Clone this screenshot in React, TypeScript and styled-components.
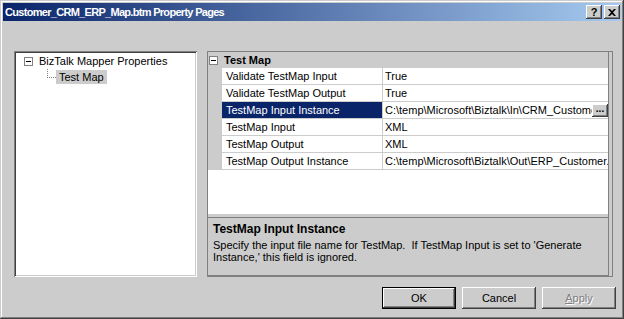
import React from 'react';
import styled, { createGlobalStyle } from 'styled-components';

const rows = [
  { name: 'Validate TestMap Input', value: 'True' },
  { name: 'Validate TestMap Output', value: 'True' },
  { name: 'TestMap Input Instance', value: 'C:\\temp\\Microsoft\\Biztalk\\In\\CRM_Customer.xml', selected: true },
  { name: 'TestMap Input', value: 'XML' },
  { name: 'TestMap Output', value: 'XML' },
  { name: 'TestMap Output Instance', value: 'C:\\temp\\Microsoft\\Biztalk\\Out\\ERP_Customer.xml' },
];

const App: React.FC = () => {
  return (
    <>
      <GlobalStyle />
      <Window>
        <TitleBar>
          <TitleText>Customer_CRM_ERP_Map.btm Property Pages</TitleText>
          <CaptionButton>?</CaptionButton>
          <CaptionButton $gap>
            <svg width="8" height="7" viewBox="0 0 8 7">
              <path d="M0 0h2l2 2 2-2h2L5 3.5 8 7H6L4 5 2 7H0l3-3.5z" fill="#000" />
            </svg>
          </CaptionButton>
        </TitleBar>
        <Body>
          <Panels>
            <TreePanel>
              <TreeRow>
                <ToggleBox $tree />
                <TreeLabel>BizTalk Mapper Properties</TreeLabel>
              </TreeRow>
              <TreeRow>
                <Connector />
                <TreeLabel $selected>Test Map</TreeLabel>
              </TreeRow>
            </TreePanel>
            <GridPanel>
              <Grid>
                <CategoryRow>
                  <ToggleBox />
                  <CategoryLabel>Test Map</CategoryLabel>
                </CategoryRow>
                {rows.map((row) => (
                  <PropRow key={row.name}>
                    <Margin />
                    <NameCell $selected={row.selected}>{row.name}</NameCell>
                    <ValueCell>
                      <ValueText>{row.value}</ValueText>
                      {row.selected && <BrowseButton>...</BrowseButton>}
                    </ValueCell>
                  </PropRow>
                ))}
              </Grid>
              <Splitter />
              <Description>
                <DescTitle>TestMap Input Instance</DescTitle>
                <DescText>
                  Specify the input file name for TestMap.&nbsp; If TestMap Input is set to 'Generate
                  <br />
                  Instance,' this field is ignored.
                </DescText>
              </Description>
            </GridPanel>
          </Panels>
          <ButtonRow>
            <DialogButton $default>OK</DialogButton>
            <DialogButton>Cancel</DialogButton>
            <DialogButton $disabled>
              <u>A</u>pply
            </DialogButton>
          </ButtonRow>
        </Body>
      </Window>
    </>
  );
};

export default App;

const GlobalStyle = createGlobalStyle`
  html, body {
    margin: 0;
    padding: 0;
    background: #cccccc;
  }
  body {
    font-family: "Liberation Sans", Arial, sans-serif;
    font-size: 11px;
    color: #000;
  }
  * {
    box-sizing: border-box;
  }
`;

const Window = styled.div`
  width: 624px;
  height: 319px;
  background: #cccccc;
  padding: 3px;
  display: flex;
  flex-direction: column;
  box-shadow: inset -1px -1px #404040, inset 1px 1px #cccccc, inset -2px -2px #808080,
    inset 2px 2px #ffffff;
`;

const TitleBar = styled.div`
  height: 18px;
  display: flex;
  align-items: center;
  padding: 0 1px 0 2px;
  background: linear-gradient(to right, #0a246a, #a6caf0);
`;

const TitleText = styled.div`
  flex: 1;
  color: #fff;
  font-weight: bold;
  font-size: 11px;
  letter-spacing: -0.7px;
  white-space: nowrap;
`;

const CaptionButton = styled.div<{ $gap?: boolean }>`
  width: 16px;
  height: 14px;
  margin-left: ${(p) => (p.$gap ? '2px' : '0')};
  background: #cccccc;
  display: flex;
  align-items: center;
  justify-content: center;
  font-weight: bold;
  font-size: 11px;
  box-shadow: inset -1px -1px #404040, inset 1px 1px #ffffff, inset -2px -2px #808080;
`;

const Body = styled.div`
  flex: 1;
  display: flex;
  flex-direction: column;
  padding: 30px 5px 0 11px;
`;

const Panels = styled.div`
  display: flex;
  gap: 10px;
  height: 226px;
`;

const TreePanel = styled.div`
  width: 183px;
  background: #fff;
  padding: 2px;
  box-shadow: inset 1px 1px #808080, inset -1px -1px #ffffff, inset 2px 2px #404040,
    inset -2px -2px #cccccc;
`;

const TreeRow = styled.div`
  height: 16px;
  display: flex;
  align-items: center;
`;

const ToggleBox = styled.span<{ $tree?: boolean }>`
  position: relative;
  width: 9px;
  height: 9px;
  margin: ${(p) => (p.$tree ? '0 5px 0 8px' : '0 6px 0 1px')};
  border: 1px solid #808080;
  background: #fff;
  flex-shrink: 0;
  &::after {
    content: '';
    position: absolute;
    left: 1px;
    top: 3px;
    width: 5px;
    height: 1px;
    background: #000;
  }
`;

const Connector = styled.span`
  width: 9px;
  height: 9px;
  margin: -8px 0 0 31px;
  border-left: 1px dotted #808080;
  border-bottom: 1px dotted #808080;
  flex-shrink: 0;
`;

const TreeLabel = styled.span<{ $selected?: boolean }>`
  padding: 1px 3px;
  margin-left: ${(p) => (p.$selected ? '0' : '-2px')};
  background: ${(p) => (p.$selected ? '#cccccc' : 'transparent')};
  white-space: nowrap;
`;

const GridPanel = styled.div`
  width: 406px;
  display: flex;
  flex-direction: column;
  padding: 1px 4px 1px 1px;
  background: #cccccc;
  box-shadow: inset 1px 1px #808080, inset -1px -1px #808080;
`;

const Grid = styled.div`
  height: 162px;
  background: #fff;
  border-right: 1px solid #808080;
`;

const CategoryRow = styled.div`
  height: 16px;
  display: flex;
  align-items: center;
  background: #cccccc;
`;

const CategoryLabel = styled.span`
  font-weight: bold;
`;

const PropRow = styled.div`
  height: 17px;
  display: flex;
`;

const Margin = styled.div`
  width: 14px;
  background: #cccccc;
`;

const NameCell = styled.div<{ $selected?: boolean }>`
  width: 161px;
  padding: 2px 4px 0;
  border-right: 1px solid #cccccc;
  border-bottom: 1px solid #cccccc;
  background: ${(p) => (p.$selected ? '#0a246a' : '#fff')};
  color: ${(p) => (p.$selected ? '#fff' : '#000')};
  white-space: nowrap;
  overflow: hidden;
`;

const ValueCell = styled.div`
  flex: 1;
  min-width: 0;
  display: flex;
  align-items: flex-start;
  border-bottom: 1px solid #cccccc;
`;

const ValueText = styled.span`
  flex: 1;
  min-width: 0;
  padding: 2px 0 0 2px;
  white-space: nowrap;
  overflow: hidden;
`;

const BrowseButton = styled.span`
  width: 16px;
  height: 13px;
  margin-top: 2px;
  background: #cccccc;
  font-weight: bold;
  font-size: 10px;
  line-height: 9px;
  text-align: center;
  flex-shrink: 0;
  box-shadow: inset -1px -1px #404040, inset 1px 1px #ffffff, inset -2px -2px #808080;
`;

const Splitter = styled.div`
  height: 3px;
  border-right: 1px solid #808080;
`;

const Description = styled.div`
  flex: 1;
  padding: 4px 5px;
  border-top: 1px solid #808080;
  border-right: 1px solid #808080;
  border-bottom: 1px solid #808080;
`;

const DescTitle = styled.div`
  font-weight: bold;
  font-size: 12px;
  margin-bottom: 3px;
`;

const DescText = styled.div`
  line-height: 12px;
  white-space: nowrap;
`;

const ButtonRow = styled.div`
  display: flex;
  justify-content: flex-end;
  gap: 6px;
  margin-top: 10px;
`;

const DialogButton = styled.div<{ $default?: boolean; $disabled?: boolean }>`
  width: 74px;
  height: 22px;
  display: flex;
  align-items: center;
  justify-content: center;
  background: #cccccc;
  color: ${(p) => (p.$disabled ? '#808080' : '#000')};
  text-shadow: ${(p) => (p.$disabled ? '1px 1px #ffffff' : 'none')};
  box-shadow: ${(p) =>
    p.$default
      ? 'inset 0 0 0 1px #000, inset -2px -2px #404040, inset 2px 2px #ffffff, inset -3px -3px #808080'
      : 'inset -1px -1px #404040, inset 1px 1px #ffffff, inset -2px -2px #808080'};
`;
